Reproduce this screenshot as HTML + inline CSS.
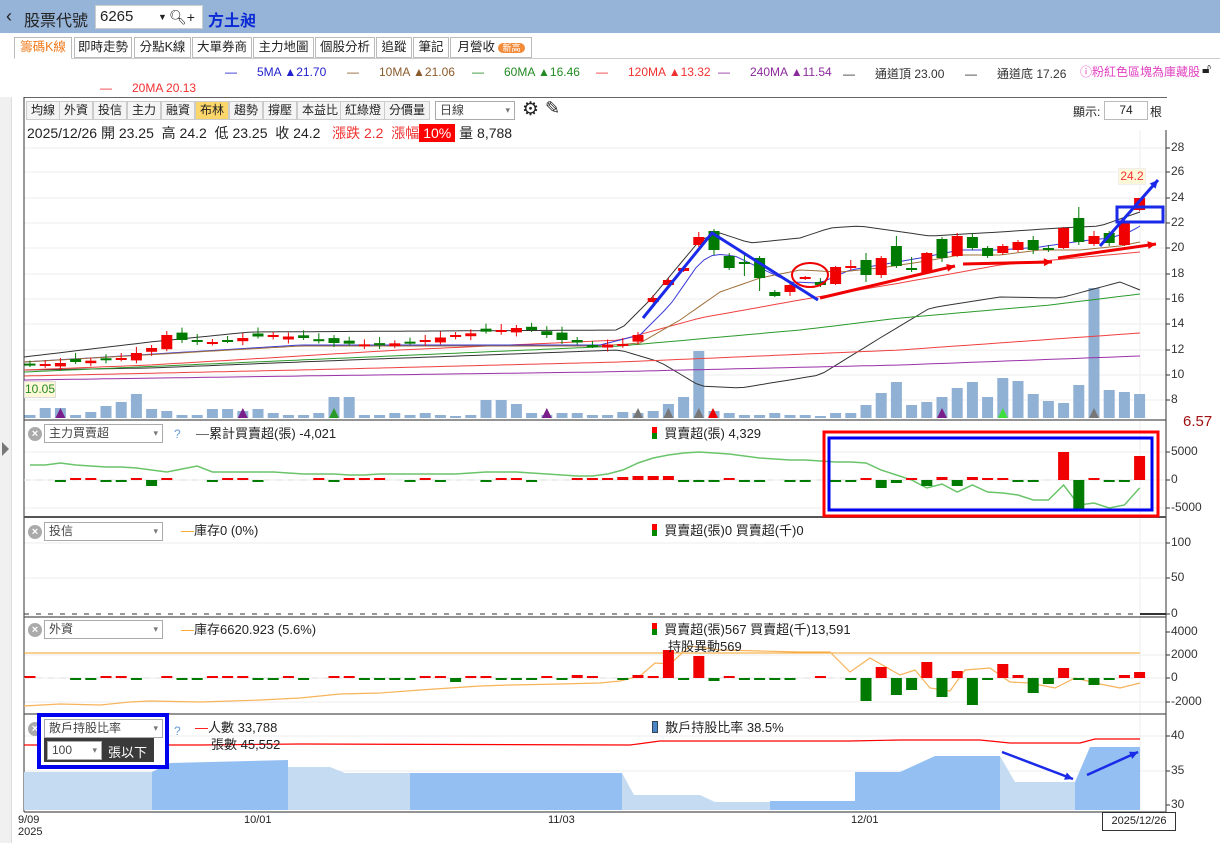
<!DOCTYPE html>
<html><head><meta charset="utf-8">
<style>
*{margin:0;padding:0;box-sizing:border-box}
body{width:1220px;height:843px;overflow:hidden;background:#fff;font-family:"Liberation Sans","Noto Sans CJK TC",sans-serif;font-size:13px;color:#222;position:relative}
.top{position:absolute;left:0;top:0;width:1220px;height:33px;background:#96b3d8}
.abs{position:absolute;white-space:nowrap}
.tab{position:absolute;top:37px;height:21px;border:1px solid #bbb;background:#fff;font-size:12.5px;line-height:19px;padding:0;text-align:center;white-space:nowrap;overflow:hidden}
.btn{position:absolute;top:101px;height:19px;border:1px solid #ccc;background:#f4f4f4;font-size:12px;line-height:17px;padding:0 4px;white-space:nowrap}
.sel{position:absolute;height:19px;border:1px solid #aaa;background:#fff;font-size:12px;line-height:17px;padding-left:4px;color:#444;white-space:nowrap}
.sel:after{content:"▾";position:absolute;right:4px;top:0;font-size:9px;color:#777}
.x{position:absolute;width:14px;height:14px;border-radius:7px;background:#aaa;color:#fff;font-size:11px;line-height:14px;text-align:center;font-weight:bold}
.ax{position:absolute;font-size:12px;color:#333}
</style></head><body>
<div class="top"></div>
<div class="abs" style="left:6px;top:6px;font-size:18px;color:#222">‹</div>
<div class="abs" style="left:24px;top:7px;font-size:16px">股票代號</div>
<div class="abs" style="left:95px;top:5px;width:108px;height:24px;background:#fff;border:1px solid #ccc;font-size:15px;line-height:22px;padding-left:4px">6265<span style="position:absolute;left:62px;font-size:9px">▼</span><span style="position:absolute;left:73px;font-size:14px">🔍︎+</span></div>
<div class="abs" style="left:208px;top:7px;font-size:16px;color:#0b2ad6;font-weight:bold">方土昶</div>
<div class="abs" style="left:14px;top:58px;width:1206px;height:1px;background:#ccc"></div>
<div class="tab" style="left:14px;width:58px;border-bottom-color:#fff;color:#f07a1a;height:22px">籌碼K線</div>
<div class="tab" style="left:74px;width:58px">即時走勢</div>
<div class="tab" style="left:134px;width:57px">分點K線</div>
<div class="tab" style="left:192px;width:60px">大單券商</div>
<div class="tab" style="left:253px;width:61px">主力地圖</div>
<div class="tab" style="left:315px;width:60px">個股分析</div>
<div class="tab" style="left:376px;width:36px">追蹤</div>
<div class="tab" style="left:413px;width:36px">筆記</div>
<div class="tab" style="left:450px;width:82px">月營收 <span style="background:#f28c3a;color:#fff;border-radius:7px;font-size:9px;padding:0 4px">新高</span></div>
<div class="abs" style="left:225px;top:65px;font-size:12px;color:#2222cc">—&nbsp;&nbsp;&nbsp;&nbsp;&nbsp; 5MA ▲21.70</div>
<div class="abs" style="left:347px;top:65px;font-size:12px;color:#8b5a2b">—&nbsp;&nbsp;&nbsp;&nbsp;&nbsp; 10MA ▲21.06</div>
<div class="abs" style="left:472px;top:65px;font-size:12px;color:#228b22">—&nbsp;&nbsp;&nbsp;&nbsp;&nbsp; 60MA ▲16.46</div>
<div class="abs" style="left:596px;top:65px;font-size:12px;color:#f03030">—&nbsp;&nbsp;&nbsp;&nbsp;&nbsp; 120MA ▲13.32</div>
<div class="abs" style="left:718px;top:65px;font-size:12px;color:#8b2a9b">—&nbsp;&nbsp;&nbsp;&nbsp;&nbsp; 240MA ▲11.54</div>
<div class="abs" style="left:843px;top:65px;font-size:12px;color:#333">—&nbsp;&nbsp;&nbsp;&nbsp;&nbsp; 通道頂 23.00</div>
<div class="abs" style="left:965px;top:65px;font-size:12px;color:#333">—&nbsp;&nbsp;&nbsp;&nbsp;&nbsp; 通道底 17.26</div>
<div class="abs" style="left:1080px;top:63px;font-size:12px;color:#e040c0">ⓘ粉紅色區塊為庫藏股</div>
<div class="abs" style="left:1202px;top:60px;font-size:14px">🔓︎</div>
<div class="abs" style="left:100px;top:81px;font-size:12px;color:#f03030">—&nbsp;&nbsp;&nbsp;&nbsp;&nbsp; 20MA 20.13</div>
<div class="abs" style="left:0;top:97px;width:12px;height:746px;background:#f0f0f0;border-right:1px solid #ddd"></div>
<div class="abs" style="left:2px;top:442px;width:0;height:0;border-left:7px solid #777;border-top:7px solid transparent;border-bottom:7px solid transparent"></div>
<div class="abs" style="left:24px;top:97px;width:1143px;height:1px;background:#666"></div>
<div class="btn" style="left:26px">均線</div><div class="btn" style="left:59px">外資</div><div class="btn" style="left:93px">投信</div><div class="btn" style="left:127px">主力</div><div class="btn" style="left:161px">融資</div>
<div class="btn" style="left:195px;background:#fbd66a">布林</div><div class="btn" style="left:229px">趨勢</div><div class="btn" style="left:263px">撐壓</div><div class="btn" style="left:297px">本益比</div><div class="btn" style="left:340px">紅綠燈</div><div class="btn" style="left:384px">分價量</div>
<div class="sel" style="left:435px;top:101px;width:80px">日線</div>
<div class="abs" style="left:522px;top:98px;font-size:19px">⚙</div>
<div class="abs" style="left:545px;top:98px;font-size:18px">✎</div>
<div class="abs" style="left:1073px;top:103px;font-size:12px">顯示:</div>
<div class="abs" style="left:1104px;top:101px;width:44px;height:19px;border:1px solid #bbb;text-align:center;font-size:12px;line-height:17px">74</div>
<div class="abs" style="left:1150px;top:103px;font-size:12px">根</div>
<div class="abs" style="left:27px;top:123px;font-size:14px">2025/12/26 開 23.25&nbsp; 高 24.2&nbsp; 低 23.25&nbsp; 收 24.2&nbsp;&nbsp; <span style="color:#f03030">漲跌 2.2&nbsp; 漲幅</span><span style="background:#f00;color:#fff;padding:1px 4px">10%</span> 量 8,788</div>
<svg id="s" class="abs" style="left:0;top:0" width="1220" height="843"></svg>
<div id="ax"></div>
<div class="x" style="left:28px;top:427px">×</div><div class="sel" style="left:44px;top:424px;width:119px">主力買賣超</div><div class="abs" style="left:174px;top:427px;color:#6a9ad8;font-size:12px">?</div>
<div class="abs" style="left:196px;top:423px;font-size:13px"><span style="color:#555">—</span>累計買賣超(張) -4,021</div>
<div class="abs" style="left:652px;top:423px;font-size:13px"><span style="display:inline-block;width:5px;height:12px;background:linear-gradient(#f00 50%,#080 50%);vertical-align:-1px"></span>&nbsp;&nbsp;買賣超(張) 4,329</div>
<div class="x" style="left:28px;top:525px">×</div><div class="sel" style="left:44px;top:522px;width:119px">投信</div>
<div class="abs" style="left:181px;top:520px;font-size:13px"><span style="color:#f5a020">—</span>庫存0 (0%)</div>
<div class="abs" style="left:652px;top:520px;font-size:13px"><span style="display:inline-block;width:5px;height:12px;background:linear-gradient(#f00 50%,#080 50%);vertical-align:-1px"></span>&nbsp;&nbsp;買賣超(張)0 買賣超(千)0</div>
<div class="x" style="left:28px;top:623px">×</div><div class="sel" style="left:44px;top:620px;width:119px">外資</div>
<div class="abs" style="left:181px;top:619px;font-size:13px"><span style="color:#f5a020">—</span>庫存6620.923 (5.6%)</div>
<div class="abs" style="left:652px;top:619px;font-size:13px"><span style="display:inline-block;width:5px;height:12px;background:linear-gradient(#f00 50%,#080 50%);vertical-align:-1px"></span>&nbsp;&nbsp;買賣超(張)567 買賣超(千)13,591</div>
<div class="abs" style="left:668px;top:636px;font-size:13px">持股異動569</div>
<div class="x" style="left:28px;top:722px">×</div>
<div class="abs" style="left:37px;top:713px;width:132px;height:56px;border:4px solid #0000f0;background:#fff"></div>
<div class="sel" style="left:44px;top:719px;width:119px">散戶持股比率</div>
<div class="abs" style="left:44px;top:738px;width:110px;height:24px;background:#3a3a3a"></div>
<div class="sel" style="left:47px;top:741px;width:55px">100</div>
<div class="abs" style="left:108px;top:742px;color:#fff;font-size:13px">張以下</div>
<div class="abs" style="left:174px;top:724px;color:#6a9ad8;font-size:12px">?</div>
<div class="abs" style="left:195px;top:717px;font-size:13px"><span style="color:#f00">—</span>人數 33,788</div>
<div class="abs" style="left:211px;top:734px;font-size:13px">張數 45,552</div>
<div class="abs" style="left:652px;top:717px;font-size:13px"><span style="display:inline-block;width:6px;height:12px;background:#4a86c8;border:1px solid #345;vertical-align:-1px"></span>&nbsp;&nbsp;散戶持股比率 38.5%</div>
<div class="abs" style="left:18px;top:814px;font-size:11px">9/09<br>2025</div>
<div class="abs" style="left:244px;top:814px;font-size:11px">10/01</div>
<div class="abs" style="left:548px;top:814px;font-size:11px">11/03</div>
<div class="abs" style="left:851px;top:814px;font-size:11px">12/01</div>
<div class="abs" style="left:1102px;top:812px;width:74px;height:19px;border:1px solid #333;font-size:11px;line-height:17px;text-align:center;background:#fff">2025/12/26</div>
<div class="abs" style="left:1118px;top:168px;width:28px;height:17px;background:#fff8d8;border:1px solid #eee;color:#f03030;font-size:12px;text-align:center;line-height:15px">24.2</div>
<div class="abs" style="left:24px;top:381px;width:32px;height:17px;background:#fff8d8;border:1px solid #ddd;color:#228b22;font-size:12px;text-align:center;line-height:15px">10.05</div>
<div class="abs" style="left:1183px;top:413px;font-size:15px;color:#a01010">6.57</div>
<script>
var S='',X=function(i){return 30+i*15.2};
function ln(x1,y1,x2,y2,c,w,d){S+='<line x1="'+x1+'" y1="'+y1+'" x2="'+x2+'" y2="'+y2+'" stroke="'+c+'" stroke-width="'+(w||1)+'"'+(d?' stroke-dasharray="'+d+'"':'')+'/>';}
function rc(x,y,w,h,c,st){S+='<rect x="'+x+'" y="'+y+'" width="'+w+'" height="'+h+'" fill="'+c+'"'+(st||'')+'/>';}
function pl(pts,c,w){S+='<polyline fill="none" stroke="'+c+'" stroke-width="'+(w||1)+'" points="'+pts+'"/>';}
function interp(a,x){for(var k=0;k<a.length-1;k++){if(x>=a[k][0]&&x<=a[k+1][0]){var t=(x-a[k][0])/(a[k+1][0]-a[k][0]);return a[k][1]+t*(a[k+1][1]-a[k][1]);}}return a[a.length-1][1];}
function curve(a,c,w){var p='';for(var x=24;x<=1140;x+=8)p+=x+','+interp(a,x).toFixed(1)+' ';p+='1140,'+interp(a,1140);pl(p,c,w);}
[148,172,198,223,248,274,299,324,350,375,400].forEach(function(y){ln(24,y,1165,y,'#eee')});
[452,480,508,543,578,655,678,702,736,771].forEach(function(y){ln(24,y,1165,y,'#eee')});
ln(1140,130,1140,810,'#eee');
ln(24,97,24,812,'#333');ln(1166,130,1166,812,'#333');
[420,517,617,714,812].forEach(function(y){ln(24,y,1166,y,'#555',y==517?2:1.2)});
var A='';function al(y,t){A+='<div class="ax" style="left:1171px;top:'+(y-8)+'px">'+t+'</div>';ln(1166,y,1170,y,'#333');}
[[148,28],[172,26],[198,24],[223,22],[248,20],[274,18],[299,16],[324,14],[350,12],[375,10],[400,8],[452,5000],[480,0],[508,-5000],[543,100],[578,50],[614,0],[632,4000],[655,2000],[678,0],[702,-2000],[736,40],[771,35],[805,30]].forEach(function(a){al(a[0],a[1])});
document.getElementById('ax').innerHTML=A;
for(var i=0;i<74;i++){var h=[3,10,10,3,6,12,16,24,9,7,3,3,9,9,7,9,5,3,3,5,21,21,3,3,5,3,5,3,2,3,18,18,14,5,3,5,5,3,3,6,5,7,14,21,67,7,5,3,3,5,3,3,2,5,5,13,25,36,13,16,21,30,36,21,40,37,24,17,15,33,130,28,26,40][i]||5;if(i==73)h=24;rc(X(i)-5.5,418-h,11,h,'#90b0d4');}
[[2,'#7a1f8a'],[14,'#7a1f8a'],[20,'#2a9a2a'],[34,'#7a1f8a'],[40,'#777'],[42,'#777'],[44,'#777'],[45,'#e00'],[60,'#7a1f8a'],[64,'#3ee03e'],[70,'#777']].forEach(function(a){var x=X(a[0]);if(a[0]==45)x=X(45)-1;S+='<polygon points="'+(x-5)+',418 '+(x+5)+',418 '+x+',408" fill="'+a[1]+'"/>';});
curve([[24,357],[150,342],[250,332],[620,330],[650,300],[700,240],[720,233],[750,243],[800,238],[830,228],[860,226],[930,236],[1000,232],[1060,228],[1100,226],[1140,212]],'#333');
curve([[24,370],[150,368],[350,360],[620,350],[660,362],[700,386],[740,388],[820,375],[880,338],[930,308],[1000,297],[1060,298],[1090,290],[1120,282],[1140,290]],'#333');
curve([[24,370],[150,365],[400,350],[620,340],[700,318],[800,300],[900,283],[1000,265],[1140,252]],'#f04040');
curve([[24,372],[300,360],[620,346],[800,330],[900,318],[1050,305],[1140,294]],'#2a9a2a');
curve([[24,376],[300,370],[620,362],[900,350],[1140,333]],'#f04040');
curve([[24,380],[300,376],[600,372],[900,365],[1140,356]],'#9b30a8');
curve([[24,362],[300,345],[600,345],[640,335],[670,305],[700,262],[715,254],[735,256],[760,268],[790,282],[820,283],[850,270],[880,265],[920,258],[960,250],[1000,250],[1040,247],[1060,244],[1090,240],[1110,238],[1130,232],[1140,226]],'#3a3ad8');
curve([[24,362],[300,346],[600,346],[640,343],[680,320],[720,292],[760,278],[800,270],[840,272],[880,268],[920,262],[960,255],[1000,255],[1040,250],[1080,250],[1120,246],[1140,242]],'#a0703a');
var anc=[[0,365],[3,362],[6,358],[8,348],[9,335],[10,340],[12,342],[14,338],[16,335],[18,338],[20,343],[23,345],[26,340],[28,335],[31,330],[32,328],[33,330],[35,340],[37,345],[39,344],[40,335]];
var C=[];var prev=366;
for(var i=0;i<=40;i++){var c=interp(anc,i);var o=prev+((i*7)%5-2)*1.2;if(Math.abs(o-c)<1)o=c+((i%3)-1)*3;C.push([o,c,Math.min(o,c)-3-(i%4),Math.max(o,c)+2+(i%3)]);prev=c;}
C=C.concat([[302,298,295,303],[285,280,278,287],[271,268,266,272],[245,237,232,247],[231,250,229,255],[256,268,253,270],[262,263,255,276],[258,278,256,291],[292,296,290,297],[292,285,283,296],[279,277,276,280],[282,285,278,287],[284,267,266,285],[268,266,260,270],[260,275,253,282],[275,258,256,278],[246,266,236,268],[268,270,257,272],[273,253,252,274],[239,258,237,262],[256,236,233,257],[237,248,233,250],[248,256,246,258],[253,246,244,255],[250,242,240,252],[240,250,236,254],[248,249,245,252],[248,228,227,249],[218,242,207,245],[244,236,231,246],[233,243,231,246],[245,221,220,246],[210,198,198,211]]);
C.forEach(function(d,i){var x=X(i),up=d[1]<d[0],col=up?'#f00000':'#007a00';ln(x,d[2],x,d[3],col);var t=Math.min(d[0],d[1]),h=Math.max(2,Math.abs(d[0]-d[1]));rc(x-5.5,t,11,h,col);});
pl('643,318 712,233 818,300','#1a2ae8',3);
S+='<ellipse cx="810" cy="275" rx="18" ry="12" fill="none" stroke="#e00" stroke-width="2"/>';
function arrow(x1,y1,x2,y2,c,w){ln(x1,y1,x2,y2,c,w);var a=Math.atan2(y2-y1,x2-x1),L=9;S+='<polygon points="'+x2+','+y2+' '+(x2-L*Math.cos(a-0.45))+','+(y2-L*Math.sin(a-0.45))+' '+(x2-L*Math.cos(a+0.45))+','+(y2-L*Math.sin(a+0.45))+'" fill="'+c+'"/>';}
arrow(820,298,955,266,'#f00000',3);arrow(963,264,1052,262,'#f00000',3);arrow(1058,258,1156,244,'#f00000',3);
arrow(1100,246,1158,180,'#1a2ae8',3);
rc(1117,207,46,15,'none',' stroke="#1a2ae8" stroke-width="3"');
ln(24,480,1140,480,'#ddd',1,'6,6');
var p2='';for(var i=0;i<74;i++){var y=[465,465,463,465,466,467,467,468,470,472,469,466,472,472,472,472,472,473,474,474,474,475,475,474,474,474,474,474,474,473,472,472,472,473,474,475,476,476,474,470,463,458,455,453,452,453,454,456,458,459,460,460,461,462,462,463,470,475,480,488,484,492,485,492,493,495,500,500,485,505,503,508,505,488][i];p2+=X(i)+','+y+' ';}
pl(p2,'#6ac46a',1.5);
var b2=[0,0,-1,1,1,-1,-1,2,-6,1,0,0,-1,1,1,-1,0,0,0,1,-1,1,1,1,0,-1,1,-1,0,0,-1,1,1,-1,0,0,1,1,2,3,4,4,4,-1,-1,-1,1,-1,-1,0,-1,-1,0,-1,-2,2,-8,-3,2,-6,3,-6,3,2,2,-1,-1,0,28,-29,2,-2,-2,24];
b2.forEach(function(v,i){if(v==0)return;var x=X(i),col=v>0?'#f00000':'#007a00',h=Math.max(2,Math.abs(v));rc(x-5.5,v>0?480-h:480,11,h,col);});
rc(824,432,334,84,'none',' stroke="#f00" stroke-width="3"');rc(829,438,323,72,'none',' stroke="#0000f0" stroke-width="3"');
ln(24,614,1140,614,'#333',1,'5,7');ln(1140,614,1166,614,'#333',2);
ln(24,653,1140,653,'#f5a020',1);
pl('24,706 60,704 100,705 130,702 150,701 200,702 260,700 300,698 340,694 380,693 420,690 450,688 480,686 510,685 560,684 600,683 620,681 640,676 655,663 670,664 690,646 720,650 760,651 800,652 830,652 850,672 870,658 900,675 915,670 930,688 950,691 965,670 990,668 1010,682 1030,683 1055,688 1075,678 1100,684 1120,688 1140,683','#f7b35a',1.2);
ln(24,678,1140,678,'#ddd',1,'6,6');
var b4=[0,1,1,0,0,-1,-2,2,1,-1,0,1,-1,-1,2,2,2,-1,-1,1,-2,0,1,1,-1,-1,-1,-1,2,2,-4,2,1,-1,-2,-1,2,-1,3,2,0,-1,3,1,28,-1,22,-3,1,-1,-2,-2,-1,0,1,0,-1,-23,11,-17,-12,16,-19,7,-27,-2,14,3,-15,-6,10,-2,-7,-2,3,6];
b4.forEach(function(v,i){var x=X(i-2);if(x<26||v==0)return;var col=v>0?'#f00000':'#007a00',h=Math.max(2,Math.abs(v));rc(x-5.5,v>0?678-h:678,11,h,col);});
pl('24,745 200,745 300,744 630,745 660,741 850,741 900,740 980,740 1010,743 1080,743 1095,739 1140,739','#f00',1.2);
function ar(pts,c){S+='<polygon points="'+pts+'" fill="'+c+'"/>';}
ar('24,772 152,772 152,810 24,810','#c4dbf2');
ar('152,772 170,763 288,760 288,810 152,810','#93bff2');
ar('288,767 330,767 345,773 410,773 410,810 288,810','#c4dbf2');
ar('410,773 622,773 622,810 410,810','#93bff2');
ar('622,773 634,795 700,795 715,802 770,802 770,810 622,810','#c4dbf2');
ar('770,801 855,801 855,810 770,810','#93bff2');
ar('855,772 900,772 935,756 1000,756 1000,810 855,810','#93bff2');
ar('1000,756 1015,782 1075,782 1075,810 1000,810','#c4dbf2');
ar('1075,782 1090,747 1140,747 1140,810 1075,810','#93bff2');
arrow(1002,752,1073,779,'#1a2ae8',2.5);arrow(1087,775,1138,752,'#1a2ae8',2.5);
document.getElementById('s').innerHTML=S;
</script>
</body></html>
